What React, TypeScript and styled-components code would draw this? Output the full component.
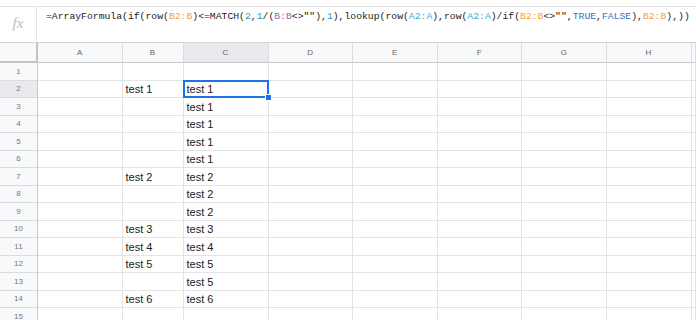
import React from 'react';
import styled, { createGlobalStyle } from 'styled-components';

const GlobalStyle = createGlobalStyle`
  html, body {
    margin: 0;
    padding: 0;
    background: #fff;
    overflow: hidden;
  }
  body {
    font-family: "Liberation Sans", Arial, sans-serif;
  }
`;

const columns = ['A', 'B', 'C', 'D', 'E', 'F', 'G', 'H', ''];
const widths = ['84.5px', '61px', '85px', '84.5px', '84.5px', '84.5px', '84.5px', '85px', '1fr'];

const colB: Record<number, string> = {
  2: 'test 1',
  7: 'test 2',
  10: 'test 3',
  11: 'test 4',
  12: 'test 5',
  14: 'test 6',
};

const colC: Record<number, string> = {
  2: 'test 1',
  3: 'test 1',
  4: 'test 1',
  5: 'test 1',
  6: 'test 1',
  7: 'test 2',
  8: 'test 2',
  9: 'test 2',
  10: 'test 3',
  11: 'test 4',
  12: 'test 5',
  13: 'test 5',
  14: 'test 6',
};

type Tok = { t: string; c?: string };
const ORANGE = '#f4a23a';
const PURPLE = '#9b6bb8';
const CYAN = '#3eaad3';
const NUM = '#2f93b8';
const BOOL = '#3a6fc6';

const formula: Tok[] = [
  { t: '=ArrayFormula(if(row(' },
  { t: 'B2:B', c: ORANGE },
  { t: ')<=MATCH(' },
  { t: '2', c: NUM },
  { t: ',' },
  { t: '1', c: NUM },
  { t: '/(' },
  { t: 'B:B', c: PURPLE },
  { t: '<>""),' },
  { t: '1', c: NUM },
  { t: '),lookup(row(' },
  { t: 'A2:A', c: CYAN },
  { t: '),row(' },
  { t: 'A2:A', c: CYAN },
  { t: ')/if(' },
  { t: 'B2:B', c: ORANGE },
  { t: '<>"",' },
  { t: 'TRUE', c: BOOL },
  { t: ',' },
  { t: 'FALSE', c: BOOL },
  { t: '),' },
  { t: 'B2:B', c: ORANGE },
  { t: '),))' },
];

export default function App() {
  const rows = Array.from({ length: 15 }, (_, i) => i + 1);
  return (
    <>
      <GlobalStyle />
      <Page>
        <FormulaBar>
          <FxBox>fx</FxBox>
          <FormulaText>
            {formula.map((tok, i) =>
              tok.c ? (
                <Ref key={i} $color={tok.c}>
                  {tok.t}
                </Ref>
              ) : (
                <React.Fragment key={i}>{tok.t}</React.Fragment>
              )
            )}
          </FormulaText>
        </FormulaBar>
        <Grid $cols={widths.join(' ')}>
          <Corner />
          {columns.map((c, i) => (
            <ColHeader key={c + i} $active={c === 'C'}>
              {c}
            </ColHeader>
          ))}
          {rows.map((r) => (
            <React.Fragment key={r}>
              <RowHeader $active={r === 2}>{r}</RowHeader>
              {columns.map((c, i) => (
                <Cell key={c + i} $selected={c === 'C' && r === 2}>
                  {c === 'B' ? colB[r] : c === 'C' ? colC[r] : ''}
                </Cell>
              ))}
            </React.Fragment>
          ))}
        </Grid>
      </Page>
    </>
  );
}

const Page = styled.div`
  width: 696px;
  height: 320px;
  padding-top: 6px;
  box-sizing: border-box;
  overflow: hidden;
`;

const FormulaBar = styled.div`
  display: flex;
  height: 35px;
  border-top: 1px solid #e3e3e3;
  border-bottom: 1px solid #d4d4d4;
`;

const FxBox = styled.div`
  width: 37px;
  border-right: 1px solid #e3e3e3;
  display: flex;
  align-items: center;
  justify-content: center;
  font-family: "Liberation Serif", serif;
  font-style: italic;
  font-size: 15px;
  color: #bdbdbd;
  padding-bottom: 2px;
  box-sizing: border-box;
`;

const FormulaText = styled.div`
  flex: 1;
  padding: 3px 0 0 9px;
  font-family: "Liberation Mono", "DejaVu Sans Mono", monospace;
  font-size: 9.75px;
  line-height: 14px;
  color: #222;
  white-space: nowrap;
  overflow: hidden;
`;

const Ref = styled.span<{ $color: string }>`
  color: ${(p) => p.$color};
`;

const Grid = styled.div<{ $cols: string }>`
  display: grid;
  grid-template-columns: 38px ${(p) => p.$cols};
  grid-template-rows: 20px;
  grid-auto-rows: 17.5px;
`;

const Corner = styled.div`
  background: #f8f9fa;
  border-right: 2px solid #c4c4c4;
  border-bottom: 2px solid #c4c4c4;
  box-sizing: border-box;
`;

const ColHeader = styled.div<{ $active?: boolean }>`
  background: ${(p) => (p.$active ? '#e8eaed' : '#f8f9fa')};
  border-right: 1px solid #dadce0;
  border-bottom: 1px solid #c8c8c8;
  box-sizing: border-box;
  display: flex;
  align-items: center;
  justify-content: center;
  font-size: 8px;
  color: #666;
`;

const RowHeader = styled.div<{ $active?: boolean }>`
  background: ${(p) => (p.$active ? '#e8eaed' : '#f8f9fa')};
  border-right: 1px solid #c8c8c8;
  border-bottom: 1px solid #dadce0;
  box-sizing: border-box;
  display: flex;
  align-items: center;
  justify-content: center;
  font-size: 8px;
  color: #777;
`;

const Cell = styled.div<{ $selected?: boolean }>`
  position: relative;
  border-right: 1px solid #e2e3e3;
  border-bottom: 1px solid #e2e3e3;
  box-sizing: border-box;
  display: flex;
  align-items: center;
  padding: 1px 0 0 3px;
  font-size: 11px;
  color: #222;
  white-space: nowrap;

  ${(p) =>
    p.$selected &&
    `
    &::before {
      content: '';
      position: absolute;
      left: -1px;
      top: -1px;
      right: -1px;
      bottom: -1px;
      border: 2px solid #1a73e8;
    }
    &::after {
      content: '';
      position: absolute;
      right: -4px;
      bottom: -4px;
      width: 5px;
      height: 5px;
      background: #1a73e8;
      border: 1px solid #fff;
      z-index: 1;
    }
  `}
`;
